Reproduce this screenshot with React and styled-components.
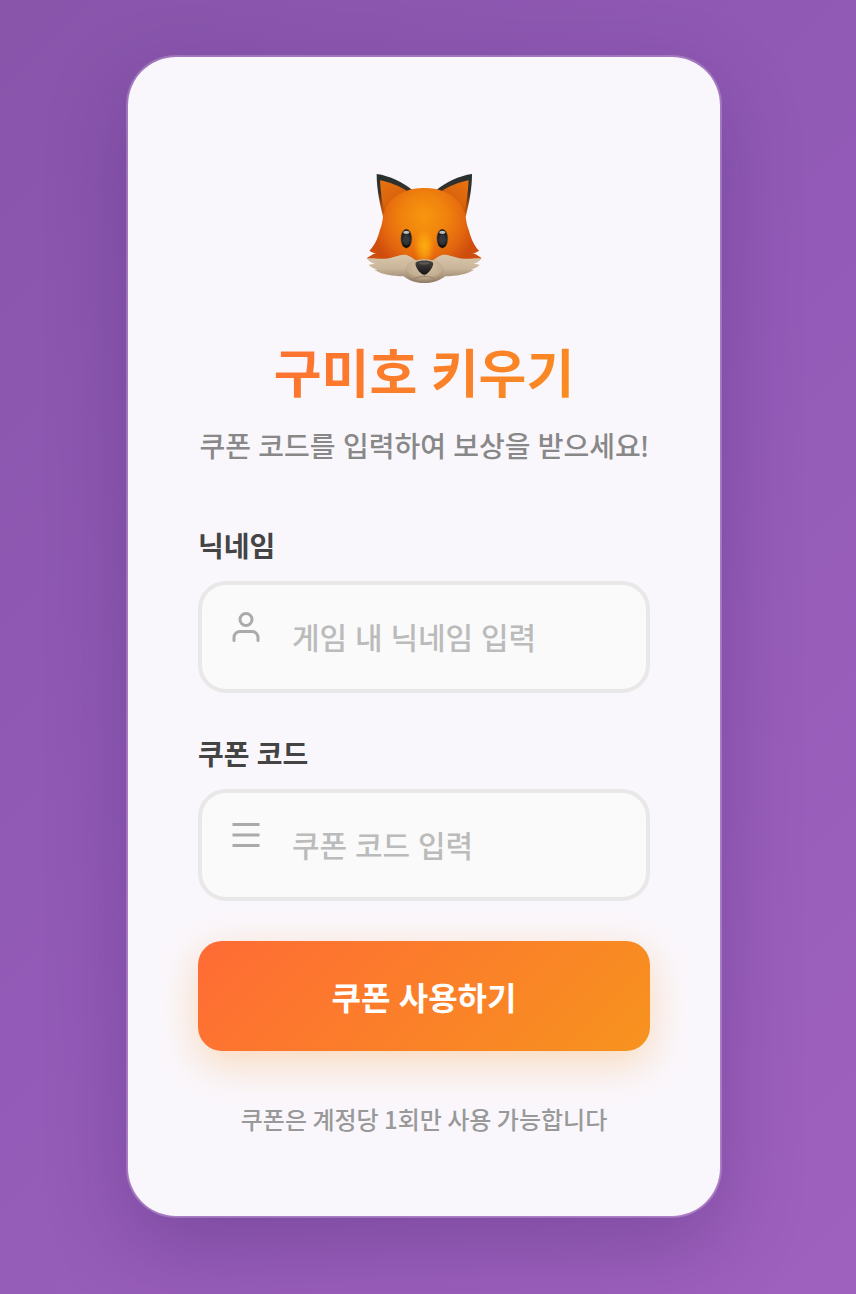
import { useState } from "react";
import styled, { createGlobalStyle } from "styled-components";

const GlobalStyle = createGlobalStyle`
  * {
    box-sizing: border-box;
  }
  body {
    margin: 0;
    font-family: "Noto Sans", "Noto Sans CJK KR", sans-serif;
    background: #8f59b3;
  }
`;

const Page = styled.main`
  min-height: 100vh;
  padding: 55px 134px 76px 126px;
  background: linear-gradient(135deg, #8855ab 0%, #935bb7 50%, #9f61be 100%);
`;

const Card = styled.section`
  display: flex;
  flex-direction: column;
  padding: 114px 70px 81px;
  border: 2px solid rgba(255, 255, 255, 0.2);
  border-radius: 50px;
  background: #faf7fc;
  background-clip: padding-box;
  box-shadow: 0 30px 80px rgba(50, 25, 90, 0.26);
`;

const FoxIcon = styled.svg`
  display: block;
  width: 120px;
  height: 114px;
  margin: 0 auto 56px;
`;

const Title = styled.h1`
  margin: 0 0 21px;
  font-size: 52px;
  font-weight: 700;
  line-height: 64px;
  text-align: center;
  color: transparent;
  background: linear-gradient(135deg, #ff6b35 0%, #f7931e 100%);
  background-clip: text;
`;

const Desc = styled.p`
  margin: 0 -10px;
  font-size: 28px;
  font-weight: 500;
  line-height: 40px;
  text-align: center;
  white-space: nowrap;
  color: #888;
`;

const Form = styled.form`
  display: flex;
  flex-direction: column;
  gap: 45px;
  margin-top: 64px;
`;

const Field = styled.div`
  display: flex;
  flex-direction: column;
  gap: 19px;
`;

const Label = styled.label`
  font-size: 28px;
  font-weight: 600;
  line-height: 32px;
  color: #444;
`;

const InputBox = styled.div`
  display: flex;
  height: 112px;
  padding: 0 26px;
  gap: 28px;
  border: 4px solid #e8e8e8;
  border-radius: 28px;
  background: #fafafa;
  &:focus-within {
    border-color: #ff6b35;
  }
`;

const InputIcon = styled.svg`
  flex: none;
  width: 36px;
  height: 36px;
  margin-top: 24px;
  fill: none;
  stroke: #aaa;
  stroke-width: 2;
`;

const Input = styled.input`
  flex: 1;
  min-width: 0;
  padding: 0;
  border: 0;
  outline: 0;
  background: transparent;
  font-family: inherit;
  font-size: 30px;
  font-weight: 500;
  color: #333;
  &::placeholder {
    color: #bbb;
    opacity: 1;
  }
`;

const SubmitButton = styled.button`
  height: 110px;
  margin-top: -5px;
  border: 0;
  border-radius: 24px;
  background: linear-gradient(135deg, #ff6b35 0%, #f7931e 100%);
  box-shadow: 0 12px 40px rgba(247, 147, 30, 0.3);
  font-family: inherit;
  font-size: 32px;
  font-weight: 700;
  color: #fff;
  cursor: pointer;
`;

const Note = styled.p`
  margin: 52px 0 0;
  font-family: "Noto Sans CJK KR", sans-serif;
  font-size: 24px;
  font-weight: 500;
  line-height: 32px;
  text-align: center;
  color: #999;
`;

function Fox() {
  return (
    <FoxIcon viewBox="60 63 360 342" aria-hidden="true">
      <defs>
        <radialGradient id="face" gradientUnits="userSpaceOnUse" cx="240" cy="200" r="165">
          <stop offset="0" stopColor="#f8960e" />
          <stop offset="0.4" stopColor="#f0830d" />
          <stop offset="0.75" stopColor="#e4670f" />
          <stop offset="1" stopColor="#cf4d0d" />
        </radialGradient>
        <linearGradient id="ear" x1="0" y1="0" x2="0" y2="1">
          <stop offset="0" stopColor="#26302f" />
          <stop offset="0.4" stopColor="#373129" />
          <stop offset="0.7" stopColor="#a94b10" />
          <stop offset="1" stopColor="#dc680a" />
        </linearGradient>
        <linearGradient id="inner" x1="0" y1="0" x2="0.6" y2="1">
          <stop offset="0" stopColor="#e9730f" />
          <stop offset="0.6" stopColor="#d9640d" />
          <stop offset="1" stopColor="#a8480a" />
        </linearGradient>
        <linearGradient id="cheek" x1="0" y1="0" x2="0" y2="1">
          <stop offset="0" stopColor="#dfcbb0" />
          <stop offset="0.55" stopColor="#c9b59a" />
          <stop offset="1" stopColor="#8c7963" />
        </linearGradient>
        <radialGradient id="muzzle" cx="0.5" cy="0.25" r="0.75">
          <stop offset="0" stopColor="#d8c5aa" />
          <stop offset="0.65" stopColor="#c4ae91" />
          <stop offset="1" stopColor="#8b7660" />
        </radialGradient>
        <radialGradient id="bridge">
          <stop offset="0" stopColor="#fdae10" />
          <stop offset="0.5" stopColor="#fba20e" stopOpacity="0.7" />
          <stop offset="1" stopColor="#f58a08" stopOpacity="0" />
        </radialGradient>
        <linearGradient id="eye" x1="0" y1="0" x2="0" y2="1">
          <stop offset="0" stopColor="#17191a" />
          <stop offset="0.6" stopColor="#292b2d" />
          <stop offset="1" stopColor="#050505" />
        </linearGradient>
        <linearGradient id="nose" x1="0" y1="0" x2="0" y2="1">
          <stop offset="0" stopColor="#484541" />
          <stop offset="1" stopColor="#151413" />
        </linearGradient>
      </defs>

      <g id="fox-ear">
        <path fill="url(#ear)" d="M98 72C137 77 177 98 204 119L164 166L119 208C107 160 98 118 98 72Z" />
        <path fill="url(#inner)" d="M108 91C136 96 166 108 190 124L150 158L123 196C114 162 110 128 108 91Z" />
      </g>
      <use href="#fox-ear" transform="matrix(-1 0 0 1 482 0)" />

      <path
        fill="url(#cheek)"
        d="M68 325C82 315 110 307 145 306L241 302L336 306C372 307 399 315 413 325C407 334 398 339 389 341L407 344C401 352 391 356 381 358L390 360C366 374 337 378 304 379C287 392 268 399 241 399C214 399 194 392 179 379C145 378 116 374 91 360L101 358C90 356 80 352 74 344L93 341C83 339 74 334 68 325Z"
      />
      <path
        fill="url(#face)"
        d="M241 114C278 113 316 126 341 152C358 170 364 190 366 208C368 222 371 232 375 242C382 268 390 286 405 302C399 307 393 309 386 309C396 313 405 318 413 325C395 323 380 327 361 326C333 325 312 311 294 315C274 321 269 337 241 337C213 337 208 321 188 315C169 311 149 325 121 326C102 327 86 323 68 325C77 318 86 313 96 309C89 309 82 307 76 302C92 286 100 268 107 242C111 232 114 222 116 208C118 190 124 170 141 152C166 126 204 113 241 114Z"
      />
      <ellipse fill="url(#bridge)" cx="241" cy="288" rx="34" ry="62" />
      <path
        fill="url(#muzzle)"
        d="M214 333C225 326 256 326 268 333C286 331 299 345 299 360C299 382 270 399 241 399C211 399 184 382 184 360C184 345 198 331 214 333Z"
      />
      <path fill="url(#nose)" d="M216 337C226 330 256 330 266 337C272 344 259 365 248 372Q241 377 234 372C222 365 210 344 216 337Z" />
      <ellipse cx="241" cy="340" rx="15" ry="4" fill="#77716a" opacity="0.5" />
      <path fill="none" stroke="#75614e" strokeWidth="2" strokeLinecap="round" opacity="0.8" d="M241 374V379M212 385C224 380 234 379 241 379C248 379 258 380 270 385" />

      <g id="fox-eye">
        <ellipse cx="187" cy="266" rx="18" ry="30" fill="#a75a10" opacity="0.7" />
        <ellipse cx="187" cy="266" rx="16" ry="28" fill="url(#eye)" />
        <ellipse cx="187" cy="247" rx="9" ry="5" fill="#bdbdba" />
        <ellipse cx="187" cy="270" rx="10" ry="17" fill="#43464a" opacity="0.5" />
      </g>
      <use href="#fox-eye" x="108" />
    </FoxIcon>
  );
}

export default function App() {
  const [nickname, setNickname] = useState("");
  const [coupon, setCoupon] = useState("");

  return (
    <>
      <GlobalStyle />
      <Page>
        <Card>
          <Fox />
          <Title>구미호 키우기</Title>
          <Desc>쿠폰 코드를 입력하여 보상을 받으세요!</Desc>
          <Form onSubmit={(ev) => ev.preventDefault()}>
            <Field>
              <Label htmlFor="nickname">닉네임</Label>
              <InputBox>
                <InputIcon viewBox="0 0 24 24" strokeLinecap="round" aria-hidden="true">
                  <path d="M20 21v-2a4 4 0 0 0-4-4H8a4 4 0 0 0-4 4v2" />
                  <circle cx="12" cy="7" r="4" />
                </InputIcon>
                <Input
                  id="nickname"
                  type="text"
                  placeholder="게임 내 닉네임 입력"
                  value={nickname}
                  onChange={(ev) => setNickname(ev.target.value)}
                />
              </InputBox>
            </Field>
            <Field>
              <Label htmlFor="coupon">쿠폰 코드</Label>
              <InputBox>
                <InputIcon viewBox="0 0 24 24" aria-hidden="true">
                  <path d="M3 5h18M3 12h18M3 19h18" />
                </InputIcon>
                <Input
                  id="coupon"
                  type="text"
                  placeholder="쿠폰 코드 입력"
                  value={coupon}
                  onChange={(ev) => setCoupon(ev.target.value)}
                />
              </InputBox>
            </Field>
            <SubmitButton type="submit">쿠폰 사용하기</SubmitButton>
          </Form>
          <Note>쿠폰은 계정당 1회만 사용 가능합니다</Note>
        </Card>
      </Page>
    </>
  );
}
